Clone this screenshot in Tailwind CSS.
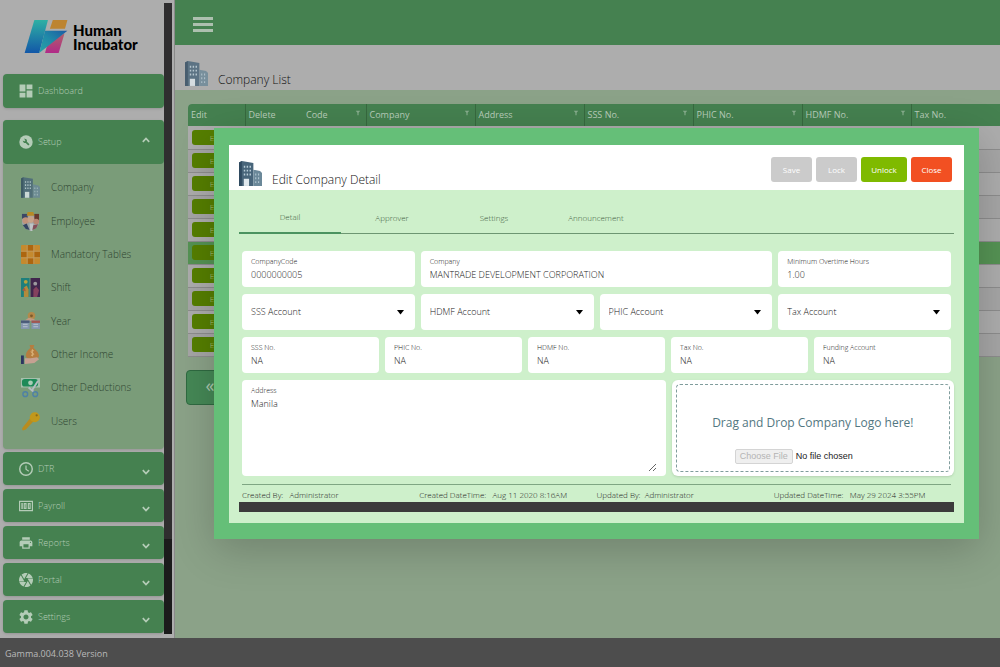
<!DOCTYPE html>
<html lang="en">
<head>
<meta charset="utf-8">
<title>Human Incubator - Company List</title>
<script src="https://cdn.jsdelivr.net/npm/@tailwindcss/browser@4"></script>
</head>
<body class="relative flex h-screen flex-col overflow-hidden bg-[#adadad] font-['Open_Sans','Noto_Sans',sans-serif] font-light text-[#222]">

<svg class="hidden" aria-hidden="true">
  <symbol id="building" viewBox="0 0 24 26">
    <path d="M0 1.500 3 0l12 2v24H0z" fill="#48657a"/>
    <path d="M15 9l7 1.500 2 2V26h-9z" fill="#6b8899"/>
    <path d="M0 1.500 3 0v26H0z" fill="#2f4a60"/>
    <path d="M5 5h1.500v2H5zm3 0h1.500v2H8zm3 0h1.500v2H11zM5 9h1.500v2H5zm3 0h1.500v2H8zm3 0h1.500v2H11zM5 13h1.500v2H5zm3 0h1.500v2H8zm3 0h1.500v2H11zM17 13h1v2h-1zm3 0h1v2h-1zM17 17h1v2h-1zm3 0h1v2h-1zM17 21h1v2h-1zm3 0h1v2h-1z" fill="#b9cdd8"/>
    <path d="M5 18.500h5.500V26H5z" fill="#dfe8ed"/>
  </symbol>
  <symbol id="chev-down" viewBox="0 0 10 10"><path d="M1.800 3.200 5 6.600l3.200-3.400" fill="none" stroke="currentColor" stroke-width="1.700"/></symbol>
  <symbol id="funnel" viewBox="0 0 8 8"><path d="M1 1h6L4.800 3.800V7H3.200V3.800z" fill="currentColor"/></symbol>
</svg>

<div class="flex min-h-0 flex-1">
  <aside class="flex w-[175px] shrink-0 border-r border-[#8a8a8a] pt-[3px] pb-1">
    <nav class="flex min-w-0 flex-1 flex-col gap-1 pl-[3px] text-[9px] text-[#b4ccb7]">
      <a href="#" class="flex h-[67px] shrink-0 items-center gap-[4px] pl-[21px] text-black">
        <svg class="h-[35px] w-[45px]" viewBox="0 0 45 36">
          <defs>
            <linearGradient id="lgA" x1="0" y1="0" x2="0" y2="1"><stop offset="0" stop-color="#2fb0a4"/><stop offset="1" stop-color="#1257a8"/></linearGradient>
            <linearGradient id="lgB" x1="0" y1="1" x2="1" y2="0"><stop offset="0" stop-color="#27a3a6"/><stop offset=".5" stop-color="#2089a8"/><stop offset="1" stop-color="#1c5aa3"/></linearGradient>
            <linearGradient id="lgC" x1="0" y1="0" x2="0" y2="1"><stop offset="0" stop-color="#b0606a"/><stop offset="1" stop-color="#b12a88"/></linearGradient>
          </defs>
          <path d="M10 1h14l-9 34H0z" fill="url(#lgA)"/>
          <path d="M29 1h15l-2.500 9H26z" fill="#bd8430"/>
          <path d="M41 15l-6 20H21l3-11z" fill="url(#lgC)"/>
          <path d="M21 12h23L15 35z" fill="url(#lgB)"/>
        </svg>
        <span class="font-[Lato] text-[15px] leading-[14px] font-black"><span class="block">Human</span><span class="block">Incubator</span></span>
      </a>
      <a href="#" class="flex h-[34px] shrink-0 items-center rounded bg-[#458150] pl-4 shadow">
        <svg class="mr-[5px] size-[14px]" viewBox="0 0 24 24" fill="currentColor"><path d="M1 13h10V1H1v12zm0 10h10v-8H1v8zm12 0h10V11H13v12zm0-22v8h10V1H13z"/></svg>
        Dashboard
      </a>
      <section class="mt-2 mb-[-1px] shrink-0 rounded bg-[#7a9c79] pb-[11px] shadow">
        <button class="flex h-11 w-full items-center rounded bg-[#458150] pr-[13px] pl-4">
          <svg class="mr-[5px] size-[14px]" viewBox="0 0 24 24"><circle cx="12" cy="12" r="11.500" fill="currentColor"/><path d="M6.500 9.500a4 4 0 0 0 5 4l4.500 4.500 2-2-4.500-4.500a4 4 0 0 0-5-5l2.500 2.500-2 2z" fill="#458150"/></svg>
          Setup
          <svg class="mb-1 ml-auto size-[10px] rotate-180"><use href="#chev-down"/></svg>
        </button>
        <ul class="grid h-[274px] auto-rows-fr pt-[7px] text-[10px] text-[#2f4531]">
          <li><a href="#" class="flex h-full items-center gap-[11px] pl-[18px]">
            <svg class="h-[21px] w-[19px] opacity-80"><use href="#building"/></svg>Company</a></li>
          <li><a href="#" class="flex h-full items-center gap-[11px] pl-[18px]">
            <svg class="h-[21px] w-[19px]" viewBox="0 0 20 20"><path d="M1 3h18v9l-3 5-6 3-6-3-3-5z" fill="#9aa3a3"/><path d="M1 2h6v5H1z" fill="#3c4766"/><path d="M7 0h6l1 4H6z" fill="#b78a25"/><path d="M14 2h5v7h-5z" fill="#67382c"/><circle cx="5" cy="9" r="3.500" fill="#c1937b"/><circle cx="10.500" cy="8" r="3.500" fill="#c7a289"/><circle cx="16" cy="10" r="3" fill="#b98671"/><path d="M2 14l4-2 3 7-4-1z" fill="#344463"/><path d="M9 12h4l-1 8h-2z" fill="#bfc4c6"/><path d="M13 14l5-1-2 4-4 2z" fill="#844e58"/></svg>Employee</a></li>
          <li><a href="#" class="flex h-full items-center gap-[11px] pl-[18px]">
            <svg class="h-[21px] w-[19px]" viewBox="0 0 20 20"><rect width="20" height="20" rx="1" fill="#c58a2e"/><path d="M7 0h6v6H7zM0 7h6v6H0zM14 7h6v6h-6zM7 14h6v6H7z" fill="#ad660f"/><path d="M6.500 0v20M13.500 0v20M0 6.500h20M0 13.500h20" stroke="#bfa070" stroke-width=".7"/></svg>Mandatory Tables</a></li>
          <li><a href="#" class="flex h-full items-center gap-[11px] pl-[18px]">
            <svg class="h-[21px] w-[19px]" viewBox="0 0 20 20"><path d="M0 0h9v20H0z" fill="#1e7f7c"/><path d="M10 0h10v20H10z" fill="#40264d"/><circle cx="5" cy="4" r="2" fill="#b9a43b"/><path d="M3 20V10l3-2 2 4v8z" fill="#b28b3c"/><path d="M1 13l3-3 1 4z" fill="#ae5842"/><circle cx="15" cy="6" r="2" fill="#9d9a9f"/><path d="M13 20v-8l3-3 3 4-2 7z" fill="#84415e"/></svg>Shift</a></li>
          <li><a href="#" class="flex h-full items-center gap-[11px] pl-[18px]">
            <svg class="h-[21px] w-[19px]" viewBox="0 0 20 20"><circle cx="11" cy="4" r="4" fill="#b3894a"/><circle cx="11" cy="4" r="1.500" fill="#7e5a2c"/><path d="M4 9l4-3 5 1 4 3z" fill="#c19a82"/><path d="M0 9h9v9H0zM11 9h9v9h-9z" fill="#8496ad"/><path d="M0 9h9v2.500H0z" fill="#4a5a78"/><path d="M11 9h9v2.500h-9z" fill="#a25650"/><path d="M2 13h5M2 15.500h5M13 13h5M13 15.500h5" stroke="#b9c3cf"/></svg>Year</a></li>
          <li><a href="#" class="flex h-full items-center gap-[11px] pl-[18px]">
            <svg class="h-[21px] w-[19px]" viewBox="0 0 20 20"><path d="M9 0h5l-1 3c4 3 6 6 6 9-2 4-12 4-14 0 0-3 1-6 5-9z" fill="#b57d3f"/><path d="M13.500 6c-3-1-4 2-1.500 2.500s1.500 3-1.500 2.200M12 4.500v7.500" stroke="#d9b27a" fill="none"/><path d="M4 14h6l7-1 2 2-5 4-10 1z" fill="#c6a192"/><path d="M0 11h3v9H0z" fill="#2c3560"/></svg>Other Income</a></li>
          <li><a href="#" class="flex h-full items-center gap-[11px] pl-[18px]">
            <svg class="h-[21px] w-[19px]" viewBox="0 0 20 20"><path d="M0 0h20v10H0z" fill="#a4c0ac"/><rect x="1" y="1" width="17" height="8" rx="3" fill="#1d8a58"/><circle cx="10" cy="5" r="2.500" fill="#a8cdb7"/><path d="M18 3l-7 11M8 10l6 5" stroke="#b5bcc2" stroke-width="2"/><circle cx="4.500" cy="17" r="2.500" fill="none" stroke="#4f81a5" stroke-width="1.500"/><circle cx="15" cy="17" r="2.500" fill="none" stroke="#4f81a5" stroke-width="1.500"/></svg>Other Deductions</a></li>
          <li><a href="#" class="flex h-full items-center gap-[11px] pl-[18px]">
            <svg class="h-[21px] w-[19px]" viewBox="0 0 20 20"><path d="M10 6l3.500 3.500L5 18.500l-3 1-1-1.500 1-2z" fill="#b98c1e"/><circle cx="14.500" cy="5.500" r="5.300" fill="#c2981a"/><circle cx="16.500" cy="3.500" r="1.200" fill="#8d6a17"/></svg>Users</a></li>
        </ul>
      </section>
      <button class="flex h-[33px] shrink-0 items-center rounded bg-[#458150] pr-[13px] pl-4 shadow">
        <svg class="mr-[5px] size-[14px]" viewBox="0 0 24 24" fill="currentColor"><path d="M12 0a12 12 0 1 0 0 24 12 12 0 0 0 0-24zm0 21.500a9.500 9.500 0 1 1 0-19 9.500 9.500 0 0 1 0 19zM13 6h-2v7l5.250 3.500 1-1.600L13 12z"/></svg>
        DTR<svg class="mt-1.5 ml-auto size-[10px]"><use href="#chev-down"/></svg>
      </button>
      <button class="flex h-[33px] shrink-0 items-center rounded bg-[#458150] pr-[13px] pl-4 shadow">
        <svg class="mr-[5px] size-[14px]" viewBox="0 0 24 24" fill="currentColor"><path d="M0 3v18h24V3zm2 16V5h20v14zM4 7h2.500v10H4zm4 0h5v10H8zm2 2v6h1V9zm5-2h5v10h-5zm2 2v6h1V9z" fill-rule="evenodd"/></svg>
        Payroll<svg class="mt-1.5 ml-auto size-[10px]"><use href="#chev-down"/></svg>
      </button>
      <button class="flex h-[33px] shrink-0 items-center rounded bg-[#458150] pr-[13px] pl-4 shadow">
        <svg class="mr-[5px] size-[14px]" viewBox="1 1 22 22" fill="currentColor"><path d="M19 8H5c-1.660 0-3 1.340-3 3v6h4v4h12v-4h4v-6c0-1.660-1.340-3-3-3zm-3 11H8v-5h8v5zm3-7c-.55 0-1-.45-1-1s.45-1 1-1 1 .45 1 1-.45 1-1 1zm-1-9H6v4h12V3z"/></svg>
        Reports<svg class="mt-1.5 ml-auto size-[10px]"><use href="#chev-down"/></svg>
      </button>
      <button class="flex h-[33px] shrink-0 items-center rounded bg-[#458150] pr-[13px] pl-4 shadow">
        <svg class="mr-[5px] size-[14px]" viewBox="2 2 20 20" fill="currentColor"><path d="M9.400 10.500l4.770-8.260C13.470 2.090 12.750 2 12 2c-2.400 0-4.600.85-6.320 2.250l3.660 6.350.06-.1zM21.540 9c-.92-2.920-3.150-5.260-6-6.340L11.880 9h9.660zm.26 1h-7.490l.29.5 4.760 8.250C21 16.970 22 14.610 22 12c0-.69-.07-1.350-.2-2zM8.540 12l-3.900-6.750C3.010 7.030 2 9.390 2 12c0 .69.07 1.350.2 2h7.490l-1.150-2zm-6.080 3c.92 2.920 3.150 5.260 6 6.340L12.120 15H2.460zm11.270 0l-3.900 6.760c.7.15 1.420.24 2.170.24 2.400 0 4.600-.85 6.320-2.250l-3.660-6.350-.93 1.600z"/></svg>
        Portal<svg class="mt-1.5 ml-auto size-[10px]"><use href="#chev-down"/></svg>
      </button>
      <button class="flex h-[33px] shrink-0 items-center rounded bg-[#458150] pr-[13px] pl-4 shadow">
        <svg class="mr-[5px] size-[14px]" viewBox="2 2 20 20" fill="currentColor"><path d="M19.140 12.940c.04-.3.06-.61.06-.94 0-.32-.02-.64-.07-.94l2.030-1.580c.18-.14.23-.41.12-.61l-1.920-3.320c-.12-.22-.37-.29-.59-.22l-2.390.96c-.5-.38-1.030-.7-1.620-.94l-.36-2.540c-.04-.24-.24-.41-.48-.41h-3.840c-.24 0-.43.17-.47.41l-.36 2.540c-.59.24-1.130.57-1.620.94l-2.390-.96c-.22-.08-.47 0-.59.22L2.740 8.870c-.12.21-.08.47.12.61l2.030 1.580c-.05.3-.09.63-.09.94s.02.64.07.94l-2.030 1.580c-.18.14-.23.41-.12.61l1.920 3.320c.12.22.37.29.59.22l2.390-.96c.5.38 1.030.7 1.620.94l.36 2.540c.05.24.24.41.48.41h3.840c.24 0 .44-.17.47-.41l.36-2.540c.59-.24 1.130-.56 1.620-.94l2.390.96c.22.08.47 0 .59-.22l1.920-3.320c.12-.22.07-.47-.12-.61l-2.010-1.580zM12 15.600c-1.980 0-3.600-1.620-3.600-3.600s1.620-3.600 3.600-3.600 3.600 1.620 3.600 3.600-1.620 3.600-3.600 3.600z"/></svg>
        Settings<svg class="mt-1.5 ml-auto size-[10px]"><use href="#chev-down"/></svg>
      </button>
    </nav>
    <div class="mr-[2px] w-2 shrink-0 bg-[#1b1b1b]"><div class="h-[85%] bg-[#2f2e2f]"></div></div>
  </aside>

  <main class="flex min-w-0 flex-1 flex-col bg-[#8ba288]">
    <header class="flex h-[45px] shrink-0 items-center bg-[#458150] pt-[3px] pl-[18px]">
      <button aria-label="Menu" class="flex w-5 flex-col gap-[3px]">
        <span class="h-[3px] bg-[#adc0af]"></span><span class="h-[3px] bg-[#adc0af]"></span><span class="h-[3px] bg-[#adc0af]"></span>
      </button>
    </header>
    <div class="flex h-[45px] shrink-0 items-end gap-[10px] bg-[#adadad] pb-[4px] pl-[10px]">
      <svg class="h-[25px] w-[23px] opacity-80"><use href="#building"/></svg>
      <h1 class="text-[12px] leading-[12px] text-[#111]">Company List</h1>
    </div>
    <div class="mt-[14px] ml-[13px] overflow-hidden rounded-tl">
      <table class="w-full table-fixed border-collapse bg-[#adadad] text-[9px]">
        <colgroup><col class="w-[57px]"><col class="w-[58px]"><col class="w-[63px]"><col class="w-[109px]"><col class="w-[109px]"><col class="w-[109px]"><col class="w-[109px]"><col class="w-[109px]"><col></colgroup>
        <thead><tr id="head" class="h-[22px] bg-[#458150] text-left text-[#b9cdbb]"></tr></thead>
        <tbody id="rows"></tbody>
      </table>
    </div>
    <div class="mt-[13px] ml-[11px]">
      <button aria-label="First page" class="flex h-[35px] w-12 items-center justify-center rounded-sm border border-[#2f6a41] bg-[#458856] pb-1 text-[18px] font-normal text-[#adc8b0]">«</button>
    </div>
  </main>
</div>

<footer class="flex h-[29px] shrink-0 items-center bg-[#4d4d4d] pt-[3px] pl-[5px] text-[9px] font-normal text-[#bababa]">Gamma.004.038 Version</footer>

<div role="dialog" aria-labelledby="dlg-title" class="absolute top-32 right-[21px] left-[214px] bg-[#65bf78] px-[15px] pt-[17px] pb-4 shadow-[0_10px_40px_rgba(0,0,0,0.2)]">
  <div class="flex h-[45px] items-end gap-[10px] bg-white pr-3 pb-[4px] pl-[10px]">
    <svg class="h-[25px] w-[23px]"><use href="#building"/></svg>
    <h2 id="dlg-title" class="text-[12px] leading-[12px] text-[#111]">Edit Company Detail</h2>
    <div class="mb-1 ml-auto flex gap-1 text-[8px] font-normal text-white">
      <button disabled class="h-[25px] w-[41px] rounded-[3px] bg-[#cbcbcb]">Save</button>
      <button disabled class="h-[25px] w-[41px] rounded-[3px] bg-[#cbcbcb]">Lock</button>
      <button class="h-[25px] w-[46px] rounded-[3px] bg-[#7fba00]">Unlock</button>
      <button class="h-[25px] w-[41px] rounded-[3px] bg-[#f25022]">Close</button>
    </div>
  </div>
  <form class="bg-[#cef0cb] px-[10px] pb-[11px]">
    <div role="tablist" class="flex h-11 border-b border-[#6d9672] pt-3 text-[8px] text-[#3f5c41]">
      <button type="button" role="tab" aria-selected="true" class="-mb-px w-[102px] border-b-2 border-[#4b9360]">Detail</button>
      <button type="button" role="tab" class="w-[102px]">Approver</button>
      <button type="button" role="tab" class="w-[102px]">Settings</button>
      <button type="button" role="tab" class="w-[102px]">Announcement</button>
    </div>
    <div class="flex flex-col gap-[7px] pt-[17px] pr-[3px] pl-[3px] text-[#222]">
      <div class="grid grid-cols-4 gap-[6px]">
        <label class="flex h-9 flex-col rounded bg-white px-[9px] pt-[6px] text-[7px] leading-[10px]">CompanyCode<input value="0000000005" class="h-[14px] w-full text-[9px]"></label>
        <label class="col-span-2 flex h-9 flex-col rounded bg-white px-[9px] pt-[6px] text-[7px] leading-[10px]">Company<input value="MANTRADE DEVELOPMENT CORPORATION" class="h-[14px] w-full text-[9px]"></label>
        <label class="flex h-9 flex-col rounded bg-white px-[9px] pt-[6px] text-[7px] leading-[10px]">Minimum Overtime Hours<input value="1.00" class="h-[14px] w-full text-[9px]"></label>
      </div>
      <div class="grid grid-cols-4 gap-[6px] text-[9px]">
        <div class="relative"><select aria-label="SSS Account" class="h-9 w-full appearance-none rounded bg-white px-[9px]"><option>SSS Account</option></select><svg class="pointer-events-none absolute top-4 right-[11px] h-[5px] w-[7px]" viewBox="0 0 7 5"><path d="M0 0h7L3.500 4.500z"/></svg></div>
        <div class="relative"><select aria-label="HDMF Account" class="h-9 w-full appearance-none rounded bg-white px-[9px]"><option>HDMF Account</option></select><svg class="pointer-events-none absolute top-4 right-[11px] h-[5px] w-[7px]" viewBox="0 0 7 5"><path d="M0 0h7L3.500 4.500z"/></svg></div>
        <div class="relative"><select aria-label="PHIC Account" class="h-9 w-full appearance-none rounded bg-white px-[9px]"><option>PHIC Account</option></select><svg class="pointer-events-none absolute top-4 right-[11px] h-[5px] w-[7px]" viewBox="0 0 7 5"><path d="M0 0h7L3.500 4.500z"/></svg></div>
        <div class="relative"><select aria-label="Tax Account" class="h-9 w-full appearance-none rounded bg-white px-[9px]"><option>Tax Account</option></select><svg class="pointer-events-none absolute top-4 right-[11px] h-[5px] w-[7px]" viewBox="0 0 7 5"><path d="M0 0h7L3.500 4.500z"/></svg></div>
      </div>
      <div class="grid grid-cols-5 gap-[6px]">
        <label class="flex h-9 flex-col rounded bg-white px-[9px] pt-[6px] text-[7px] leading-[10px]">SSS No.<input value="NA" class="h-[14px] w-full text-[9px]"></label>
        <label class="flex h-9 flex-col rounded bg-white px-[9px] pt-[6px] text-[7px] leading-[10px]">PHIC No.<input value="NA" class="h-[14px] w-full text-[9px]"></label>
        <label class="flex h-9 flex-col rounded bg-white px-[9px] pt-[6px] text-[7px] leading-[10px]">HDMF No.<input value="NA" class="h-[14px] w-full text-[9px]"></label>
        <label class="flex h-9 flex-col rounded bg-white px-[9px] pt-[6px] text-[7px] leading-[10px]">Tax No.<input value="NA" class="h-[14px] w-full text-[9px]"></label>
        <label class="flex h-9 flex-col rounded bg-white px-[9px] pt-[6px] text-[7px] leading-[10px]">Funding Account<input value="NA" class="h-[14px] w-full text-[9px]"></label>
      </div>
      <div class="-mr-[3px] grid grid-cols-[3fr_2fr] gap-[6px]">
        <label class="flex h-24 flex-col rounded bg-white px-[9px] pt-[6px] pb-1 text-[7px] leading-[10px]">Address<textarea class="w-full flex-1 resize pt-px text-[9px] leading-[13px]">Manila</textarea></label>
        <div class="flex h-24 rounded-md bg-white p-1 shadow-sm">
          <div class="flex flex-1 flex-col items-center rounded-sm border border-dashed border-[#7f9c9c] pt-[28px]">
            <p class="text-[12px] leading-[20px] font-normal text-[#527781]">Drag and Drop Company Logo here!</p>
            <input type="file" disabled aria-label="Company logo" class="mt-[16px] w-[156px] font-['Liberation_Sans'] text-[9px] leading-[13px] font-normal text-[#222] file:mr-[3px] file:rounded-xs file:border file:border-solid file:border-[#d4d4d4] file:bg-[#efefef] file:px-1 file:text-[#b4b4b4]">
          </div>
        </div>
      </div>
    </div>
    <div class="mt-2 mr-[3px] ml-[3px] grid h-[18px] grid-cols-4 items-end border-t border-[#7fa683] text-[8px] leading-[14px] whitespace-nowrap">
      <span>Created By: &nbsp; Administrator</span><span>Created DateTime: &nbsp; Aug 11 2020 8:16AM</span><span>Updated By: &nbsp;Administrator</span><span>Updated DateTime: &nbsp; May 29 2024 3:55PM</span>
    </div>
    <div class="h-[10px] bg-[#3b3b3b]"></div>
  </form>
</div>

<script>
const cols = ['Edit','Delete','Code','Company','Address','SSS No.','PHIC No.','HDMF No.','Tax No.'];
document.getElementById('head').innerHTML = cols.map((c, i) =>
  `<th class="${i === 0 || i === 2 ? 'pl-[3px]' : 'border-l border-[#37693f] pl-[3px]'} font-normal"><span class="flex items-center">${c}${i > 1 && i < 8 ? '<svg class="mr-[5px] mb-1 ml-auto size-[6px] text-[#86ad8c]"><use href="#funnel"/></svg>' : ''}</span></th>`).join('');
document.getElementById('rows').innerHTML = Array.from({length: 10}, (_, r) =>
  `<tr class="h-[23px] border-b border-[#8d8d8d] ${r === 5 ? 'bg-[#559354]' : r % 2 ? 'bg-[#a6a6a6]' : 'bg-[#adadad]'}"><td class="pl-1"><button class="block h-[15px] w-[49px] rounded-[3px] bg-[#567f00] text-[8px] leading-[15px] text-[#adc08a]">Edit</button></td>${'<td></td>'.repeat(8)}</tr>`).join('');
</script>
</body>
</html>
